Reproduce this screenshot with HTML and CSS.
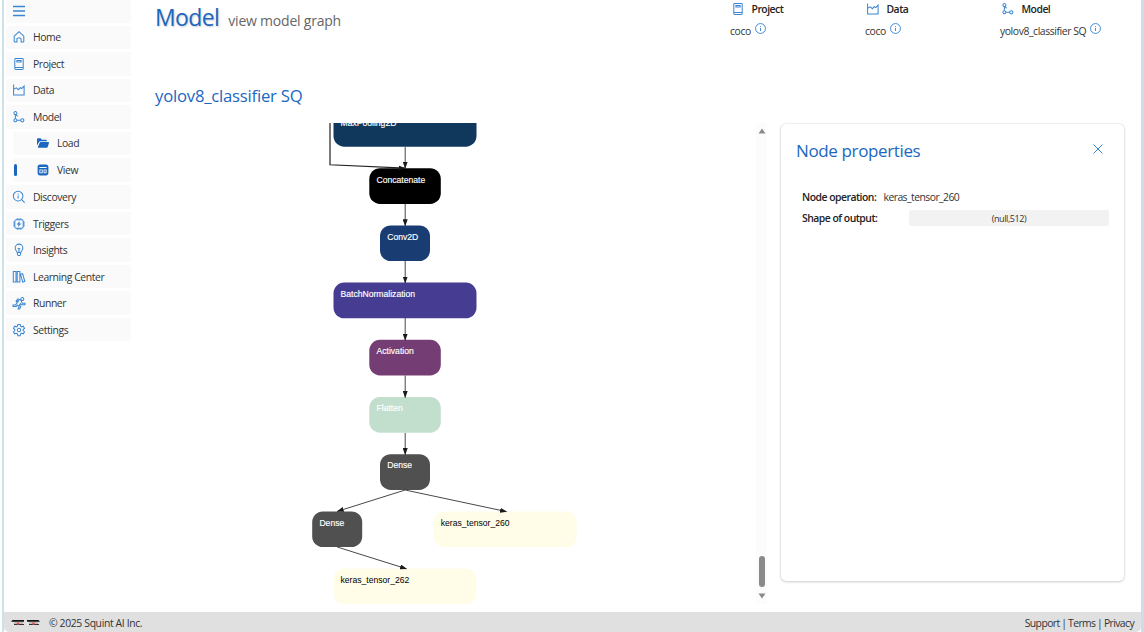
FILE: index.html
```html
<!DOCTYPE html>
<html lang="en">
<head>
    <meta charset="UTF-8">
    <meta name="viewport" content="width=device-width, initial-scale=1.0">
    <title>Squint - Model</title>
    <link rel="stylesheet" href="styles.css">
</head>
<body>
    <!-- shared icons -->
    <svg class="sprite">
        <symbol id="i-project" viewBox="0 0 20 20"><path d="M3 2.500C3 1.500 3.700 1 4.500 1h11c.9 0 1.500.6 1.500 1.500v15c0 .9-.6 1.500-1.500 1.500h-11C3.600 19 3 18.400 3 17.500zM3 16h14M6.500 4h7v2.500h-7z"/></symbol>
        <symbol id="i-data" viewBox="0 0 20 20"><path d="M1 1v17.500h17.500V3.500L14.500 7.500l-2.500-1.500L9 9.500 5.500 6.500 1 9"/></symbol>
        <symbol id="i-model" viewBox="0 0 20 20"><circle cx="4" cy="3.500" r="2.500"/><circle cx="4" cy="15.500" r="2.500"/><circle cx="15.500" cy="15.500" r="2.700"/><path d="M4 6v7M6.500 15.500h6.500M5.500 6l2 3"/></symbol>
        <symbol id="i-info" viewBox="0 0 20 20"><circle cx="10" cy="10" r="9"/><path d="M10 9v5.500M10 5.500v1.500"/></symbol>
    </svg>

    <div class="window">
        <div class="content">
            <nav class="sidebar">
                <a class="item menu"><svg class="icon" viewBox="0 0 20 20"><path d="M0 2.500h20M0 10h20M0 17.500h20"/></svg></a>
                <a class="item"><svg class="icon" viewBox="0 0 20 20"><path d="M2 8.500l8-7.500L18 8.500v9c0 .6-.4 1-1 1h-3.500v-5c0-1.200-.8-2-2-2h-3c-1.200 0-2 .8-2 2v5H3c-.6 0-1-.4-1-1z"/></svg><span>Home</span></a>
                <a class="item"><svg class="icon"><use href="#i-project"/></svg><span>Project</span></a>
                <a class="item"><svg class="icon"><use href="#i-data"/></svg><span>Data</span></a>
                <a class="item"><svg class="icon"><use href="#i-model"/></svg><span>Model</span></a>
                <a class="item sub"><svg class="icon solid" viewBox="0 0 20 20"><path d="M0 14V4c0-1.100.9-2 2-2h4l2 2.500h6.500c1.100 0 2 .9 2 2V7H6C4.500 7 3.500 7.800 3 9zM4.500 9.500C4.800 8.700 5.300 8.300 6 8.300h13c.8 0 1.200.6 1 1.300l-2 6.700c-.3 1-1 1.700-2 1.700H2.500c-.8 0-1.200-.6-1-1.300z"/></svg><span>Load</span></a>
                <a class="item sub active"><svg class="icon solid" viewBox="0 0 20 20"><path fill-rule="evenodd" d="M5 1h10c2.200 0 4 1.800 4 4v10c0 2.200-1.800 4-4 4H5c-2.200 0-4-1.800-4-4V5c0-2.200 1.800-4 4-4zM4 5v1.500h12V5zM4 9v6.500h5.500V9zM5.500 10.500H8V14H5.500zM11 9v6.500h5V9zM12.500 10.500h2V14h-2z"/></svg><span>View</span></a>
                <a class="item"><svg class="icon" viewBox="0 0 20 20"><circle cx="8.500" cy="8.500" r="8"/><path d="M14 14l5.500 5.500M8.500 7.500v5M8.500 4v1.800"/></svg><span>Discovery</span></a>
                <a class="item"><svg class="icon" viewBox="0 0 20 20"><rect x="3" y="3" width="14" height="14" rx="2.500"/><path d="M7 .5V3M10 .5V3M13 .5V3M7 17v2.500M10 17v2.500M13 17v2.500M.5 7H3M.5 10H3M.5 13H3M17 7h2.500M17 10h2.500M17 13h2.500"/><path class="bolt" d="M11 5L6 11h3L8.300 15l5.700-6h-3.300z"/></svg><span>Triggers</span></a>
                <a class="item"><svg class="icon" viewBox="0 0 20 20"><path d="M7 14c-.3-2-3.500-3.500-3.500-7.300a6.500 6.500 0 0 1 13 0c0 3.800-3.200 5.300-3.500 7.300zM7 14l.5 3.500c.1.900.7 1.500 1.500 1.500h2c.8 0 1.400-.6 1.500-1.500L13 14M8 7l2 2 2-2M10 9v5"/></svg><span>Insights</span></a>
                <a class="item"><svg class="icon" viewBox="0 0 20 20"><path d="M.5 1h4.500v17.500H.5zM7 1h4.500v17.500H7zM12.500 5.500l3.500-1 3.700 13-3.500 1z"/></svg><span>Learning Center</span></a>
                <a class="item"><svg class="icon" viewBox="0 0 20 20"><circle cx="15.500" cy="3.500" r="2.500"/><path d="M5 7l3-4 5.500 2.500c1 .5 1 1.500.5 2.500l1.500 2.500H20v2.500h-6l-1.500-2-2 2.500 2.500 2-2 4.500H8.500l1.500-4-3-2.500L5.500 16H0v-2.500h4L9.500 6 8.500 5.500 6.500 8.500z"/></svg><span>Runner</span></a>
                <a class="item"><svg class="icon" viewBox="0 0 20 20"><circle cx="10" cy="10" r="2.800"/><path d="M8 .7h4l.6 3 1.700 1 2.900-1 2 3.500L17 9.200v1.700l2.200 2-2 3.500-2.900-1-1.700 1-.6 3H8l-.6-3-1.700-1-2.900 1-2-3.500 2.200-2V9.200L.8 7.200l2-3.500 2.900 1 1.700-1z"/></svg><span>Settings</span></a>
            </nav>

            <main class="main">
                <header class="header">
                    <div class="title">
                        <h1>Model</h1>
                        <span class="subtitle">view model graph</span>
                    </div>
                    <div class="status">
                        <div class="status-col">
                            <div class="status-head"><svg class="icon"><use href="#i-project"/></svg><b>Project</b></div>
                            <div class="status-value"><span>coco</span><svg class="info"><use href="#i-info"/></svg></div>
                        </div>
                        <div class="status-col">
                            <div class="status-head"><svg class="icon"><use href="#i-data"/></svg><b>Data</b></div>
                            <div class="status-value"><span>coco</span><svg class="info"><use href="#i-info"/></svg></div>
                        </div>
                        <div class="status-col">
                            <div class="status-head"><svg class="icon"><use href="#i-model"/></svg><b>Model</b></div>
                            <div class="status-value"><span>yolov8_classifier SQ</span><svg class="info"><use href="#i-info"/></svg></div>
                        </div>
                    </div>
                </header>

                <h2>yolov8_classifier SQ</h2>

                <div class="workspace">
                    <svg class="graph" viewBox="155 123 601 481">
                        <defs>
                            <marker id="arrow" viewBox="0 0 7 5" refX="6.500" refY="2.500" markerWidth="7" markerHeight="5" markerUnits="userSpaceOnUse" orient="auto"><path d="M0 0L7 2.500L0 5z" fill="#1a1a1a"/></marker>
                        </defs>
                        <g class="nodes">
                            <rect x="333.500" y="111" width="143" height="35.700" rx="10.700" fill="#10375c"/>
                            <rect x="369.300" y="168.200" width="71.500" height="35.700" rx="10.700" fill="#000000"/>
                            <rect x="380" y="225.400" width="50" height="35.700" rx="10.700" fill="#193c73"/>
                            <rect x="333.500" y="282.600" width="143" height="35.700" rx="10.700" fill="#463d92"/>
                            <rect x="369.300" y="339.800" width="71.500" height="35.700" rx="10.700" fill="#743d74"/>
                            <rect x="369.300" y="397" width="71.500" height="35.700" rx="10.700" fill="#c2dfce"/>
                            <rect x="380" y="454.200" width="50" height="35.700" rx="10.700" fill="#505050"/>
                            <rect x="312.200" y="511.400" width="50" height="35.700" rx="10.700" fill="#505050"/>
                            <rect x="433.700" y="511.400" width="143" height="35.700" rx="10.700" fill="#fffde7"/>
                            <rect x="333.500" y="568.600" width="143" height="35.700" rx="10.700" fill="#fffde7"/>
                        </g>
                        <g class="labels">
                            <text x="340.500" y="126">MaxPooling2D</text>
                            <text x="376.500" y="182.800">Concatenate</text>
                            <text x="387.200" y="240">Conv2D</text>
                            <text x="340.500" y="297.200">BatchNormalization</text>
                            <text x="376.500" y="354.300">Activation</text>
                            <text x="376.500" y="411.300">Flatten</text>
                            <text x="387.200" y="468.400">Dense</text>
                            <text x="319.400" y="525.600">Dense</text>
                            <text class="dark" x="440.800" y="525.600">keras_tensor_260</text>
                            <text class="dark" x="340.500" y="583">keras_tensor_262</text>
                        </g>
                        <g class="edges">
                            <path d="M405.200 147V168.200"/>
                            <path class="skip" d="M330 120V164.800L405 168.200"/>
                            <path d="M405.200 204V225.800"/>
                            <path d="M405.200 261V283"/>
                            <path d="M405.200 318V340.200"/>
                            <path d="M405.200 375.500V397.400"/>
                            <path d="M405.200 433V454.600"/>
                            <path d="M405.200 490L337.200 511.400"/>
                            <path d="M405.200 490L506.500 511.600"/>
                            <path d="M337.200 547L406.500 568.800"/>
                        </g>
                    </svg>

                    <div class="scrollbar">
                        <svg class="arrow" viewBox="0 0 8 6"><path d="M4 0.500L7.500 5.500H0.500z"/></svg>
                        <div class="thumb"></div>
                        <svg class="arrow" viewBox="0 0 8 6"><path d="M4 5.500L7.500 0.500H0.500z"/></svg>
                    </div>

                    <section class="panel">
                        <div class="panel-head">
                            <h3>Node properties</h3>
                            <svg class="close" viewBox="0 0 10 10"><path d="M.5.5l9 9M9.500.5l-9 9"/></svg>
                        </div>
                        <div class="prop">
                            <b>Node operation:</b>
                            <span>keras_tensor_260</span>
                        </div>
                        <div class="prop">
                            <b>Shape of output:</b>
                            <span class="shape">(null,512)</span>
                        </div>
                    </section>
                </div>
            </main>
        </div>

        <footer class="footer">
            <div class="brand">
                <svg class="glasses" viewBox="0 0 30 8"><path d="M1.500 1h11.500v1.800H0zM16 1h11.500L29 2.800H16z" fill="#111"/><path d="M.5 3v3M16.500 3v3" stroke="#eee" stroke-width="1"/><path d="M3 5.500h10M18 5.500h10" stroke="#333" stroke-width="1.200"/><path d="M3 4h9M18 4h9" stroke="#999"/><circle cx="7" cy="4.500" r="1.300" fill="#e4574f"/><circle cx="22.500" cy="4.500" r="1.300" fill="#e4574f"/></svg>
                <span>© 2025 Squint AI Inc.</span>
            </div>
            <div class="links">Support | Terms | Privacy</div>
        </footer>
    </div>
</body>
</html>
```

FILE: styles.css
```css
* {
    margin: 0;
    padding: 0;
    box-sizing: border-box;
}

body {
    font-family: 'Segoe UI', 'Open Sans', 'Noto Sans', sans-serif;
    font-size: 10.4px;
    letter-spacing: -0.42px;
    color: #333333;
    background: #ffffff;
    height: 100vh;
    overflow: hidden;
}

.sprite {
    display: none;
}

.window {
    display: flex;
    flex-direction: column;
    height: 632px;
    margin-left: 2px;
    border-left: 2px solid #cbe3e8;
    border-right: 3px solid #cbe0e6;
    background: #ffffff;
}

.content {
    display: flex;
    flex: 1;
    min-height: 0;
}

.icon {
    width: 12px;
    height: 12px;
    flex: none;
    fill: none;
    stroke: #3b86d2;
    stroke-width: 1.7;
    overflow: visible;
}

.icon .bolt {
    fill: #3b86d2;
    stroke: none;
}

.icon.solid {
    fill: #1b67c0;
    stroke: none;
}

/* sidebar */
.sidebar {
    display: flex;
    flex-direction: column;
    gap: 3px;
    width: 126.5px;
    padding-left: 2px;
}

.item {
    display: flex;
    align-items: center;
    gap: 8px;
    height: 23.5px;
    padding-left: 7px;
    background: #fafafa;
    border-radius: 2px;
}

.item.menu {
    height: 22.5px;
}

.item.menu .icon {
    stroke-width: 2.2;
}

.item.sub {
    margin-left: 7px;
    padding-left: 24px;
}

.item.active {
    margin-bottom: 0.8px;
    padding-left: 1px;
}

.item.active::before {
    content: "";
    width: 3px;
    height: 12px;
    margin-right: 12px;
    border-radius: 2px;
    background: #1b67c0;
}

/* main area */
.main {
    flex: 1;
    display: flex;
    flex-direction: column;
    padding: 0 17px 0 24.5px;
}

.header {
    display: flex;
    justify-content: space-between;
    height: 84px;
}

.title {
    display: flex;
    align-items: baseline;
    gap: 9px;
    height: 36px;
}

h1 {
    font-size: 23px;
    font-weight: 400;
    line-height: 35px;
    letter-spacing: -0.6px;
    color: #1b67c0;
    text-shadow: 1px 1px 2px #cccccc;
}

.subtitle {
    font-size: 14px;
    letter-spacing: -0.22px;
    line-height: 35px;
    color: #666666;
}

.status {
    display: flex;
    width: 394px;
    padding-top: 1px;
}

.status-col {
    width: 135px;
    flex: none;
}

.status-head {
    display: flex;
    align-items: center;
    gap: 8px;
    height: 16px;
    padding-left: 1.5px;
    color: #222222;
}

.status-head b {
    letter-spacing: -0.5px;
}

.status-value {
    display: flex;
    align-items: center;
    gap: 4px;
    height: 26px;
}

.status-value span {
    padding-top: 1px;
}

.info {
    width: 11px;
    height: 11px;
    margin-bottom: 3px;
    fill: none;
    stroke: #3b86d2;
    stroke-width: 1.7;
}

h2 {
    height: 39px;
    font-size: 16.7px;
    font-weight: 400;
    line-height: 24px;
    letter-spacing: -0.22px;
    color: #1b67c0;
}

b {
    font-weight: 600;
}

.workspace {
    display: flex;
    align-items: flex-start;
}

.graph {
    width: 601px;
    height: 481px;
    flex: none;
}

.labels {
    font-family: 'Liberation Sans', Arial, sans-serif;
    font-size: 8.6px;
    letter-spacing: 0;
    fill: #ffffff;
    stroke: #ffffff;
    stroke-width: 0.15;
}

.labels .dark {
    fill: #000000;
    stroke: none;
}

.edges path {
    fill: none;
    stroke: #333333;
    stroke-width: 0.9;
    marker-end: url(#arrow);
}

.edges .skip {
    stroke: #222222;
    stroke-width: 1.2;
}

.scrollbar {
    display: flex;
    flex-direction: column;
    align-items: center;
    width: 11px;
    height: 481px;
    padding: 5px 0 5px;
    background: #fcfcfc;
}

.arrow {
    width: 8px;
    height: 6px;
    fill: #8a8a8a;
}

.thumb {
    width: 6px;
    height: 31px;
    margin: auto 0 6px;
    border-radius: 3px;
    background: #8a8a8a;
}

/* node properties */
.panel {
    width: 343px;
    height: 457px;
    margin: 1px 0 0 14px;
    padding: 14px 15px 15px 15px;
    border-radius: 5px;
    background: #ffffff;
    box-shadow: 0 0 2px rgba(0, 0, 0, 0.16), 0 1px 3px rgba(0, 0, 0, 0.16);
}

.panel-head {
    display: flex;
    justify-content: space-between;
    height: 48px;
    padding-right: 6px;
}

h3 {
    font-size: 17px;
    font-weight: 400;
    line-height: 25px;
    letter-spacing: -0.37px;
    color: #1b67c0;
}

.close {
    width: 10px;
    height: 10px;
    margin-top: 6px;
    fill: none;
    stroke: #3b86d2;
    stroke-width: 1;
    overflow: visible;
}

.prop {
    display: flex;
    align-items: center;
    height: 21.5px;
    padding-left: 6px;
}

.prop b {
    width: 81.5px;
    letter-spacing: -0.5px;
    color: #222222;
    white-space: nowrap;
}

.prop span {
    letter-spacing: -0.55px;
}

.prop .shape {
    width: 200px;
    height: 16px;
    margin-left: auto;
    border-radius: 2px;
    background: #f2f2f2;
    font-size: 9px;
    line-height: 17px;
    letter-spacing: -0.4px;
    text-align: center;
}

.footer {
    display: flex;
    align-items: center;
    justify-content: space-between;
    height: 20.5px;
    padding: 2px 7px 0 7px;
    border-radius: 0 0 5px 5px;
    background: #e0e0e0;
}

.brand {
    display: flex;
    align-items: center;
    gap: 8px;
    letter-spacing: -0.36px;
}

.links {
    letter-spacing: -0.6px;
    word-spacing: -0.4px;
}

.glasses {
    width: 30px;
    height: 8px;
}
```
